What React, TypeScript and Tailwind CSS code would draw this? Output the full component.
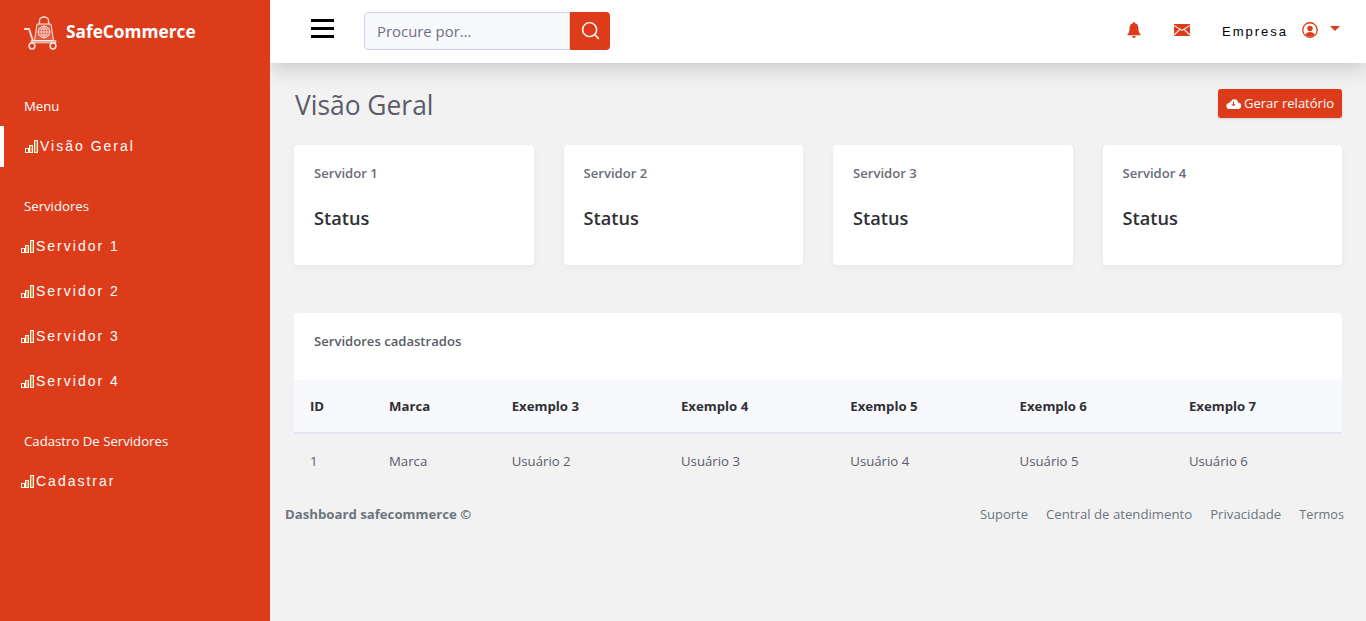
import React from "react";
import { Search } from "lucide-react";

const sans = "font-['Open_Sans','Noto_Sans',sans-serif]";

function Bars() {
  return (
    <svg width="13" height="13" viewBox="0 0 13 13" fill="none" className="mb-[1px] shrink-0">
      <rect x="0.5" y="8.500" width="3" height="4" stroke="#fff" />
      <rect x="4.500" y="5.500" width="3" height="7" stroke="#fff" fill="#f3a93c" fillOpacity="0.7" />
      <rect x="9.500" y="0.500" width="3" height="12" stroke="#fff" fill="#f3a93c" fillOpacity="0.7" />
    </svg>
  );
}

function Logo() {
  return (
    <svg width="34" height="34" viewBox="0 0 34 34" fill="none" stroke="#fff" strokeOpacity="0.85" className="mt-[3px] shrink-0">
      <path d="M1 13h5l4 12" strokeWidth="1.800" />
      <rect x="8" y="24.500" width="25" height="2.500" fill="#fff" fillOpacity="0.55" strokeWidth="0.500" />
      <path d="M14 8h14l2.500 16.500H11.500z" strokeWidth="1" fill="#fff" fillOpacity="0.16" />
      <path d="M16.500 8V4.500a4.500 3.500 0 0 1 9 0V8" strokeWidth="1.300" />
      <circle cx="21" cy="16" r="5.800" strokeWidth="1" />
      <path d="M15.200 16h11.600M21 10.200v11.600M16.500 13h9M16.500 19h9" strokeWidth="0.800" />
      <path d="M21 10.200c-4 3.500-4 8 0 11.600M21 10.200c4 3.500 4 8 0 11.600" strokeWidth="0.700" />
      <circle cx="9" cy="30" r="2.900" strokeWidth="1.500" />
      <circle cx="30" cy="30" r="2.900" strokeWidth="1.500" />
    </svg>
  );
}

function NavItem({ label, active }: { label: string; active?: boolean }) {
  return (
    <div
      className={`flex h-[41px] items-center font-['Liberation_Sans',sans-serif] text-[14px] tracking-[2px] text-white ${
        active ? "border-l-[4px] border-white pl-[21px]" : "pl-[21px]"
      }`}
    >
      <Bars />
      <span className="ml-[2px]">{label}</span>
    </div>
  );
}

function Heading({ label }: { label: string }) {
  return <div className={`pl-[24px] text-[13.2px] leading-[20px] text-white ${sans}`}>{label}</div>;
}

function Sidebar() {
  return (
    <aside className="relative z-20 flex w-[270px] shrink-0 flex-col bg-[#dd3c1b]">
      <div className="flex h-[63px] items-center pl-[23px]">
        <Logo />
        <span className={`ml-[9px] text-[17.3px] font-bold leading-none text-white ${sans}`}>SafeCommerce</span>
      </div>
      <div className="pt-[33px]">
        <Heading label="Menu" />
        <div className="mt-[10px]">
          <NavItem label="Visão Geral" active />
        </div>
      </div>
      <div className="pt-[29px]">
        <Heading label="Servidores" />
        <div className="mt-[10px] flex flex-col gap-[4px]">
          <NavItem label="Servidor 1" />
          <NavItem label="Servidor 2" />
          <NavItem label="Servidor 3" />
          <NavItem label="Servidor 4" />
        </div>
      </div>
      <div className="pt-[29px]">
        <Heading label="Cadastro De Servidores" />
        <div className="mt-[10px]">
          <NavItem label="Cadastrar" />
        </div>
      </div>
    </aside>
  );
}

function Topbar() {
  return (
    <header className="relative z-10 flex h-[63px] items-center bg-white pl-[41px] pr-[26px] shadow-[0_4px_20px_rgba(58,59,69,0.25)]">
      <div className="mb-[6px] flex w-[23px] flex-col gap-[5px]">
        <div className="h-[3px] bg-black" />
        <div className="h-[3px] bg-black" />
        <div className="h-[3px] bg-black" />
      </div>
      <div className="mb-[2px] ml-[30px] flex h-[38px] w-[246px]">
        <div className={`flex flex-1 items-center rounded-l-[4px] border border-[#d1d3e2] bg-[#f8f9fc] pl-[12px] pt-[2px] text-[14.9px] text-[#6e707e] ${sans}`}>
          Procure por...
        </div>
        <div className="flex w-[40px] items-center justify-center rounded-r-[4px] bg-[#dd3c1b]">
          <Search size={21} color="#fff" strokeWidth={1.7} />
        </div>
      </div>
      <div className="mb-[4px] ml-auto flex items-center">
        <svg width="14" height="16" viewBox="0 0 16 17" fill="#dd3c1b" preserveAspectRatio="none">
          <path d="M8 0a1.200 1.200 0 0 0-1.100 1.200C4.400 1.700 3 3.700 3 6c0 4-1 5.500-2.500 7v1h15v-1C14 11.500 13 10 13 6c0-2.300-1.400-4.300-3.900-4.800A1.200 1.200 0 0 0 8 0zM6 15a2 2 0 0 0 4 0z" />
        </svg>
        <svg width="16" height="12" viewBox="0 0 17 13" fill="#dd3c1b" className="ml-[33px]" preserveAspectRatio="none">
          <rect width="17" height="13" />
          <path d="M0 1.500l8.500 5.500L17 1.500M0 12l6-6M17 12l-6-6" fill="none" stroke="#fff" strokeWidth="1.200" />
        </svg>
        <span className="ml-[32px] pt-[4px] font-['Liberation_Sans',sans-serif] text-[13px] tracking-[2px] text-black">Empresa</span>
        <svg width="16" height="16" viewBox="0 0 17 17" className="ml-[14px]">
          <circle cx="8.500" cy="8.500" r="7.700" fill="none" stroke="#dd3c1b" strokeWidth="1.400" />
          <circle cx="8.500" cy="6.800" r="2.900" fill="#dd3c1b" />
          <path d="M3.500 13.500c.8-2 2.800-3 5-3s4.200 1 5 3a7 7 0 0 1-10 0z" fill="#dd3c1b" />
        </svg>
        <svg width="10" height="5" viewBox="0 0 10 5" fill="#dd3c1b" className="mb-[2px] ml-[12px]">
          <path d="M0 0h10L5 5z" />
        </svg>
      </div>
    </header>
  );
}

function StatusCard({ name }: { name: string }) {
  return (
    <div className={`h-[120px] rounded-[4px] bg-white px-[20px] pt-[19px] shadow-[0_2px_6px_rgba(58,59,69,0.05)] ${sans}`}>
      <div className="text-[13.1px] font-semibold leading-[18px] text-[#6a6c78]">{name}</div>
      <div className="mt-[23px] text-[18.200px] font-semibold leading-[27px] text-[#2f3036]">Status</div>
    </div>
  );
}

const headers = ["Exemplo 3", "Exemplo 4", "Exemplo 5", "Exemplo 6", "Exemplo 7"];
const cells = ["Usuário 2", "Usuário 3", "Usuário 4", "Usuário 5", "Usuário 6"];
const cols = "grid grid-cols-[79px_122.700px_repeat(5,169.300px)]";

function ServersTable() {
  return (
    <section className={sans}>
      <div className="h-[67px] rounded-t-[4px] bg-white px-[20px] pt-[19px] text-[13.1px] font-semibold leading-[18px] text-[#5a5c69]">
        Servidores cadastrados
      </div>
      <div className={`${cols} h-[54px] items-center border-b-2 border-[#e3e6f0] bg-[#f8f9fc] pt-[2px] text-[13.2px] font-bold text-[#2f3036]`}>
        <div className="pl-[16px]">ID</div>
        <div className="pl-[16px]">Marca</div>
        {headers.map((h) => (
          <div key={h} className="pl-[16px]">{h}</div>
        ))}
      </div>
      <div className={`${cols} h-[54px] items-center pt-[2px] text-[13.2px] text-[#5a5c69]`}>
        <div className="pl-[16px]">1</div>
        <div className="pl-[16px]">Marca</div>
        {cells.map((c) => (
          <div key={c} className="pl-[16px]">{c}</div>
        ))}
      </div>
    </section>
  );
}

export default function App() {
  return (
    <div className="flex h-[621px] overflow-hidden bg-[#f2f2f2]">
      <Sidebar />
      <div className="flex min-w-0 flex-1 flex-col">
        <Topbar />
        <main className="flex-1">
          <div className="px-[24px]">
            <div className="flex items-start justify-between pt-[26px]">
              <h1 className={`pl-[1px] text-[26.400px] leading-[32px] text-[#5a5c69] ${sans}`}>Visão Geral</h1>
              <button className={`flex h-[29px] w-[124px] items-center justify-center gap-[3px] rounded-[3px] bg-[#dd3c1b] text-[13px] text-white shadow-sm ${sans}`}>
                <svg width="15" height="11" viewBox="0 0 15 11">
                  <path d="M12.100 4.600A3.800 3.800 0 0 0 5 3.200 3 3 0 0 0 3.300 5 3 3 0 0 0 3.500 11h8.300a3.200 3.200 0 0 0 .3-6.400z" fill="#fff" />
                  <path d="M7.500 3.500v4M5.700 6l1.800 2 1.800-2" fill="none" stroke="#dd3c1b" strokeWidth="1" />
                </svg>
                <span className="pt-[1px]">Gerar relatório</span>
              </button>
            </div>
            <div className="mt-[24px] grid grid-cols-4 gap-[30px]">
              <StatusCard name="Servidor 1" />
              <StatusCard name="Servidor 2" />
              <StatusCard name="Servidor 3" />
              <StatusCard name="Servidor 4" />
            </div>
            <div className="mt-[48px]">
              <ServersTable />
            </div>
          </div>
          <footer className={`mt-[16px] flex items-center justify-between pl-[15px] pr-[22px] text-[13.2px] leading-[20px] text-[#6c757d] ${sans}`}>
            <span className="font-bold">Dashboard safecommerce ©</span>
            <div className="flex gap-[18px]">
              <span className="text-[13px]">Suporte</span>
              <span>Central de atendimento</span>
              <span>Privacidade</span>
              <span className="text-[12.7px]">Termos</span>
            </div>
          </footer>
        </main>
      </div>
    </div>
  );
}
